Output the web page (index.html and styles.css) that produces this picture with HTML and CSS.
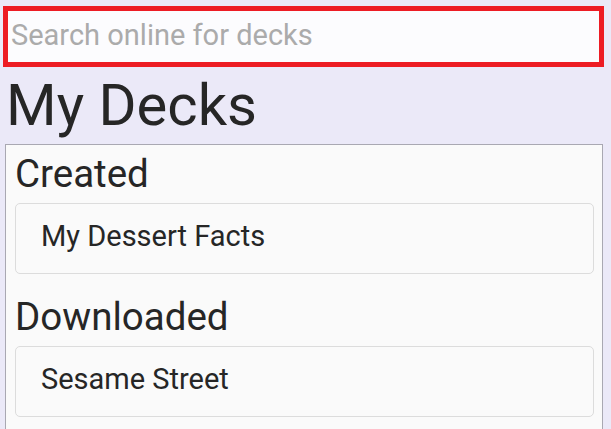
FILE: index.html
```html
<!DOCTYPE html>
<html>
<head>
<meta charset="utf-8">
<link rel="stylesheet" href="styles.css">
</head>
<body>
  <div class="search">
    <input class="search-input" type="text" placeholder="Search online for decks">
  </div>
  <h1 class="title">My Decks</h1>
  <div class="card">
    <h2 class="section">Created</h2>
    <div class="deck">My Dessert Facts</div>
    <h2 class="section">Downloaded</h2>
    <div class="deck">Sesame Street</div>
  </div>
</body>
</html>
```

FILE: styles.css
```css
html, body {
  margin: 0;
  padding: 0;
  background: #ebe9f8;
  font-family: Roboto, "Noto Sans", sans-serif;
  color: #262626;
  overflow: hidden;
}

.search {
  margin: 6px 7px 0 3px;
  height: 61px;
  box-sizing: border-box;
  border: 5px solid #ed1c24;
  background: #fcfcfe;
  display: flex;
  align-items: center;
  padding-bottom: 4px;
}

.search-input {
  flex: 1;
  border: none;
  outline: none;
  background: transparent;
  font-family: Roboto, sans-serif;
  font-size: 29px;
  padding: 0 0 0 3px;
  margin: 0;
  color: #262626;
}

.search-input::placeholder {
  color: #ababab;
}

.title {
  margin: 0;
  padding-left: 6px;
  font-size: 58px;
  font-weight: 400;
  line-height: 77px;
  height: 77px;
}

.card {
  margin: 0 8px 0 5px;
  border: 1px solid #a9a8b2;
  background: #fafafa;
  padding: 0 8px 20px 9px;
}

.section {
  margin: 0;
  font-size: 38.5px;
  font-weight: 400;
  line-height: 58px;
}

.deck {
  border: 1px solid #dcdcdc;
  border-radius: 5px;
  background: #fafafa;
  height: 69px;
  box-sizing: border-box;
  height: 71px;
  display: flex;
  align-items: center;
  padding-left: 25px;
  padding-bottom: 6px;
  font-size: 29px;
  margin-bottom: 14px;
}
```
